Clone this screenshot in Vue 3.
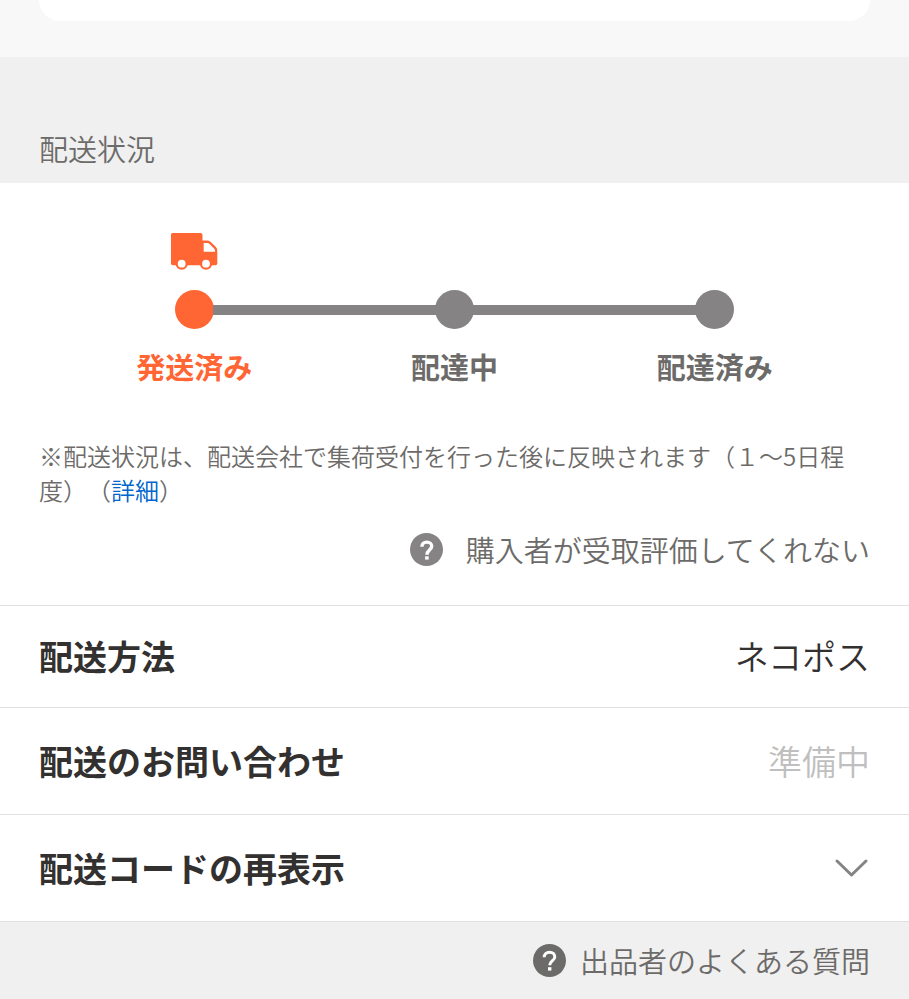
<template>
  <main class="page">
    <div class="summary">
      <div class="summary-card"></div>
    </div>

    <h2 class="section-title">配送状況</h2>

    <section class="status">
      <ol class="steps">
        <li
          v-for="(step, index) in steps"
          :key="step"
          class="step"
          :class="{ active: index === currentStep }"
        >
          <div class="step-icon">
            <svg v-if="index === currentStep" width="47" height="38" viewBox="1 0 47 38">
              <path
                fill="#ff6633"
                fill-rule="evenodd"
                d="M2.500 0H30.500Q32.500 0 32.500 2V7.500H37Q39 7.500 40.500 8.700L45.500 13.500Q47.300 15.300 47.300 17.500V30.500Q47.300 32.300 45.500 32.300H2.800Q1 32.300 1 30.500V2Q1 0 2.500 0ZM33.700 10V18.700H45V17.500Q45 16.500 44.200 15.700L39.300 10.800Q38.500 10 37.500 10Z"
              />
              <circle cx="11.700" cy="30.700" r="6.100" fill="#ff6633" />
              <circle cx="36" cy="30.700" r="6.100" fill="#ff6633" />
              <circle cx="11.700" cy="30.700" r="3.900" fill="#fff" />
              <circle cx="36" cy="30.700" r="3.900" fill="#fff" />
            </svg>
          </div>
          <div class="step-track">
            <span class="line" :class="{ hidden: index === 0 }"></span>
            <span class="dot"></span>
            <span class="line" :class="{ hidden: index === steps.length - 1 }"></span>
          </div>
          <span class="step-label">{{ step }}</span>
        </li>
      </ol>

      <p class="note">※配送状況は、配送会社で集荷受付を行った後に反映されます（１～5日程度）（<a href="#">詳細</a>）</p>

      <a href="#" class="help">
        <svg class="help-icon" viewBox="0 0 33 33">
          <circle cx="16.500" cy="16.500" r="16.500" />
          <path class="mark" d="M11.900 13.800C11.900 10.900 14 9.100 16.800 9.100C19.600 9.100 21.700 10.800 21.700 13.200C21.700 16.700 17 16.800 17 21.700" />
          <rect x="15.100" y="23.300" width="3.600" height="3.300" />
        </svg>
        <span>購入者が受取評価してくれない</span>
      </a>
    </section>

    <dl class="row row-method">
      <dt>配送方法</dt>
      <dd>ネコポス</dd>
    </dl>
    <dl class="row">
      <dt>配送のお問い合わせ</dt>
      <dd class="pending">準備中</dd>
    </dl>
    <button type="button" class="row" :aria-expanded="codeOpen" @click="codeOpen = !codeOpen">
      <span>配送コードの再表示</span>
      <svg class="chevron" :class="{ open: codeOpen }" width="36" height="20" viewBox="0 0 36 20">
        <path d="M3 3L17.500 17L32 3" />
      </svg>
    </button>

    <footer class="footer">
      <a href="#" class="help faq">
        <svg class="help-icon" viewBox="0 0 33 33">
          <circle cx="16.500" cy="16.500" r="16.500" />
          <path class="mark" d="M11.200 13.200C11.200 10.100 13.500 8.200 16.500 8.200C19.500 8.200 21.800 10.100 21.800 12.900C21.800 16.600 16.700 16.700 16.700 21.300" />
          <rect x="15" y="23.200" width="3.400" height="3.400" />
        </svg>
        <span>出品者のよくある質問</span>
      </a>
    </footer>
  </main>
</template>

<script setup>
import { ref } from 'vue';

const steps = ['発送済み', '配達中', '配達済み'];
const currentStep = ref(0);
const codeOpen = ref(false);
</script>

<style>
body {
  margin: 0;
  background-color: #f0f0f0;
}
</style>

<style scoped>
.page {
  font-family: "Noto Sans CJK JP", sans-serif;
  font-weight: 350;
  color: #333030;
  text-spacing-trim: space-all;
}

.summary {
  padding: 0 39px 36px;
  background-color: #f8f8f8;
}

.summary-card {
  height: 21px;
  border-radius: 0 0 24px 24px;
  background-color: #fff;
}

.section-title {
  margin: 0;
  padding: 71px 39px 15px;
  font-size: 29px;
  font-weight: 350;
  line-height: 40px;
  color: #6c6b69;
}

.status {
  padding: 50px 39px 36px;
  background-color: #fff;
}

.steps {
  display: flex;
  margin: 0 25px 53px;
  padding: 0;
  list-style: none;
}

.step {
  flex: 1;
  text-align: center;
  color: #6c6b69;
}

.step-icon {
  height: 57px;
}

.step-icon svg {
  display: block;
  margin: 0 auto;
}

.step-track {
  display: flex;
  align-items: center;
  margin-bottom: 17px;
}

.line {
  flex: 1;
  height: 10px;
  background-color: #858383;
}

.line.hidden {
  visibility: hidden;
}

.dot {
  width: 39px;
  height: 39px;
  margin: 0 -1px;
  border-radius: 50%;
  background-color: #858383;
}

.step-label {
  display: block;
  font-size: 29px;
  font-weight: 700;
  line-height: 40px;
}

.active .dot {
  background-color: #ff6633;
}

.active .step-label {
  color: #ff6633;
}

.note {
  margin: 0 0 22px;
  font-size: 24px;
  line-height: 34px;
  color: #6c6b69;
}

.note a {
  color: #0066cc;
  text-decoration: none;
}

.help {
  display: flex;
  align-items: center;
  justify-content: flex-end;
  gap: 23px;
  font-size: 29px;
  line-height: 40px;
  color: #6c6b69;
  text-decoration: none;
}

.help-icon {
  width: 33px;
  height: 33px;
  fill: #858383;
}

.help-icon .mark {
  fill: none;
  stroke: #fff;
  stroke-width: 3.4;
}

.help-icon rect {
  fill: #fff;
}

.row {
  display: flex;
  box-sizing: border-box;
  align-items: center;
  justify-content: space-between;
  width: 100%;
  margin: 0;
  padding: 28px 39px;
  border: 0;
  border-top: 1px solid #e0e0e0;
  background-color: #fff;
  font-family: inherit;
  font-size: 34px;
  font-weight: 700;
  line-height: 50px;
  color: #333030;
  text-align: left;
}

.row-method {
  padding: 25px 39px 26px;
}

button.row {
  cursor: pointer;
}

.row dd {
  margin: 0;
  font-weight: 350;
}

.row .pending {
  color: #bfbfbf;
}

.chevron {
  fill: none;
  stroke: #858383;
  stroke-width: 3;
  stroke-linecap: round;
  stroke-linejoin: round;
}

.chevron.open {
  transform: rotate(180deg);
}

.footer {
  padding: 18px 39px 19px;
  border-top: 1px solid #e0e0e0;
}

.faq {
  gap: 14px;
}

.faq .help-icon {
  fill: #6c6b69;
}

.faq .mark {
  stroke-width: 3;
}
</style>
